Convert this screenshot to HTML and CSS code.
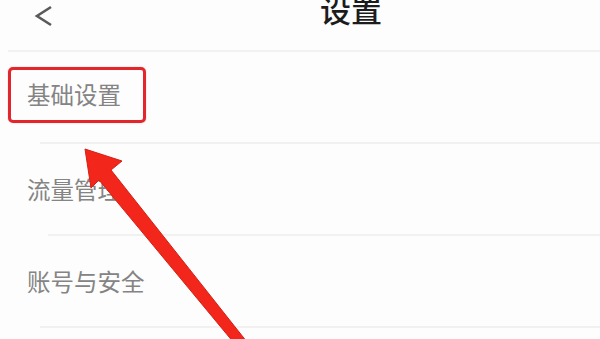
FILE: index.html
```html
<!DOCTYPE html>
<html>
<head>
    <title>设置</title>
    <link rel="stylesheet" href="styles.css">
</head>
<body>
    <div id="page">
        <div class="header">
            <svg class="back" width="20" height="24" viewBox="0 0 20 24">
                <polyline points="17,3 3,12 17,21" fill="none" stroke="#5a5a5a" stroke-width="2.6"/>
            </svg>
            <div class="title">设置</div>
        </div>
        <div class="sep sep-top"></div>

        <div class="item item-first">
            <div class="mark">基础设置</div>
        </div>
        <div class="sep"></div>
        <div class="item">流量管理</div>
        <div class="sep sep-mid"></div>
        <div class="item">账号与安全</div>
        <div class="sep"></div>

        <!-- 红色箭头标注 -->
        <svg class="arrow" width="600" height="339" viewBox="0 0 600 339">
            <polygon points="85,149 122,161 111,170 247,342 239,349 99,180 91,188"
                     fill="#f3261c" stroke="#d61f16" stroke-width="1" stroke-linejoin="round"/>
        </svg>
    </div>
</body>
</html>
```

FILE: styles.css
```css
body {
    margin: 0;
    background-color: #fdfdfd;
    font-family: "Noto Sans CJK SC", "Noto Sans", sans-serif;
    overflow: hidden;
}

#page {
    position: relative;
    width: 600px;
    height: 339px;
    overflow: hidden;
}

.header {
    height: 50px;
    display: flex;
    align-items: flex-start;
}

.back {
    margin-left: 34px;
    margin-top: 4px;
}

.title {
    margin-left: 266px;
    margin-top: -7px;
    font-size: 31px;
    line-height: 31px;
    font-weight: 500;
    color: #1c1c1c;
}

.sep {
    height: 2px;
    margin-left: 40px;
    background-color: #f1f1f1;
}

.sep-top {
    margin-left: 8px;
}

.sep-mid {
    margin-left: 48px;
}

.item {
    height: 90px;
    display: flex;
    align-items: center;
    padding-left: 27px;
    font-size: 23.5px;
    color: #848484;
}

.item-first {
    align-items: flex-start;
    padding-left: 8px;
}

.mark {
    margin-top: 15px;
    width: 116px;
    height: 37px;
    padding: 13px 0 0 16px;
    box-sizing: content-box;
    border: 3.5px solid #e2262b;
    border-radius: 5px;
    line-height: 23.5px;
    box-shadow: 0 0 1px rgba(226, 38, 43, 0.6);
}

.arrow {
    position: absolute;
    left: 0;
    top: 0;
    pointer-events: none;
}
```
